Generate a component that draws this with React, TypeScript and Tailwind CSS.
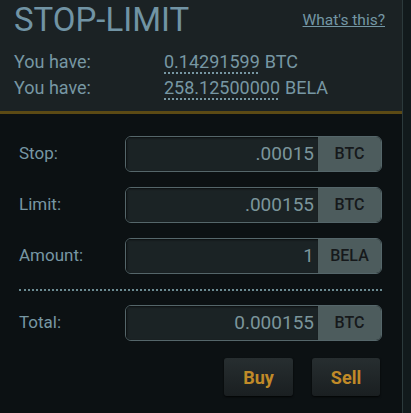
const rows = [
  { label: "Stop:", value: ".00015", unit: "BTC" },
  { label: "Limit:", value: ".000155", unit: "BTC" },
  { label: "Amount:", value: "1", unit: "BELA" },
];

function Field({ label, value, unit }: { label: string; value: string; unit: string }) {
  return (
    <div className="flex items-center h-[36px]">
      <div className="w-[106px] text-[17px] text-[#7797a3]">{label}</div>
      <div className="flex flex-1 h-full rounded-[6px] border border-[#55666a] overflow-hidden">
        <div className="flex-1 bg-[#1b2325] flex items-center justify-end pr-[4px] text-[19px] text-[#7b959b] shadow-[inset_1px_1px_2px_rgba(0,0,0,0.6)]">
          {value}
        </div>
        <div className="w-[63px] bg-[#4d5c5d] flex items-center justify-center text-[16px] font-medium text-[#16191b]">
          {unit}
        </div>
      </div>
    </div>
  );
}

function App() {
  return (
    <div
      className="w-[411px] h-[413px] bg-[#121a1c] flex overflow-hidden"
      style={{ fontFamily: "Roboto, 'Liberation Sans', sans-serif" }}
    >
      <div className="w-[403px] flex flex-col border-r border-[#2c3a3c]">
        <div className="bg-[#1b2224] h-[111px] px-[14px]">
          <div className="flex items-start justify-between">
            <div className="text-[33px] leading-[40px] text-[#7194a4]">STOP-LIMIT</div>
            <a className="mt-[9px] mr-[3px] text-[15.5px] text-[#7497a5] underline">What's this?</a>
          </div>
          <div className="mt-[11px] flex flex-col gap-[4px] text-[18px] text-[#7797a3] leading-[22px]">
            <div className="flex">
              <span className="w-[150px]">You have:</span>
              <span className="underline decoration-dotted decoration-2 underline-offset-4">0.14291599</span>
              <span className="ml-[5px]">BTC</span>
            </div>
            <div className="flex">
              <span className="w-[150px]">You have:</span>
              <span className="underline decoration-dotted decoration-2 underline-offset-4">258.12500000</span>
              <span className="ml-[5px]">BELA</span>
            </div>
          </div>
        </div>
        <div className="h-[3px] bg-[#5c4a14]" />
        <div className="flex-1 bg-[#0c1113] pl-[19px] pr-[20px] pt-[22px]">
          <div className="flex flex-col gap-[15px]">
            {rows.map((r) => (
              <Field key={r.label} {...r} />
            ))}
          </div>
          <div className="mt-[15px] border-t-2 border-dotted border-[#6b8b92]" />
          <div className="mt-[14px]">
            <Field label="Total:" value="0.000155" unit="BTC" />
          </div>
          <div className="mt-[17px] flex justify-end gap-[19px] pr-[2px]">
            <button className="w-[69px] h-[38px] rounded-[3px] bg-gradient-to-b from-[#272e30] to-[#1a1f21] text-[18px] font-bold text-[#c08a28] shadow-[0_1px_2px_rgba(0,0,0,0.8)]">
              Buy
            </button>
            <button className="w-[68px] h-[38px] rounded-[3px] bg-gradient-to-b from-[#272e30] to-[#1a1f21] text-[18px] font-bold text-[#c08a28] shadow-[0_1px_2px_rgba(0,0,0,0.8)]">
              Sell
            </button>
          </div>
        </div>
      </div>
    </div>
  );
}

export default App;
